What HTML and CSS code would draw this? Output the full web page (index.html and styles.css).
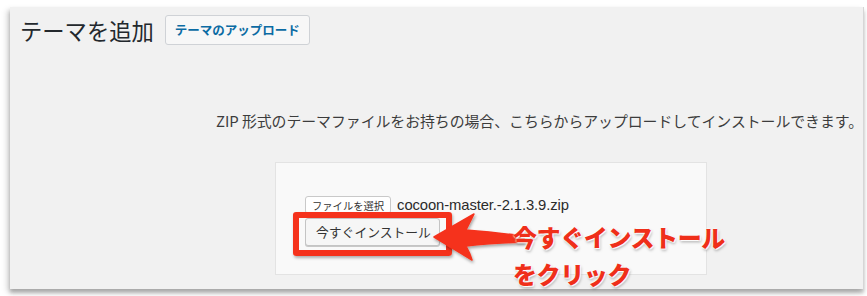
FILE: index.html
```html
<!DOCTYPE html>
<html lang="ja">
<head>
<meta charset="utf-8">
<title>テーマを追加</title>
<link rel="stylesheet" href="styles.css">
</head>
<body>
<div class="frame">
  <div class="header">
    <h1 class="title">テーマを追加</h1>
    <span class="upload-btn">テーマのアップロード</span>
  </div>
  <p class="desc">ZIP 形式のテーマファイルをお持ちの場合、こちらからアップロードしてインストールできます。</p>
  <div class="upload-box">
    <div class="file-row">
      <span class="file-btn">ファイルを選択</span>
      <span class="file-name">cocoon-master.-2.1.3.9.zip</span>
    </div>
    <span class="install-btn">今すぐインストール</span>
  </div>
  <div class="highlight"></div>
  <svg class="arrow" width="110" height="60" viewBox="0 0 110 60">
    <defs>
      <filter id="sh" x="-20%" y="-20%" width="140%" height="150%">
        <feDropShadow dx="1" dy="2" stdDeviation="1.5" flood-color="#000" flood-opacity="0.35"/>
      </filter>
    </defs>
    <path d="M3 27 L43 4 Q38 14 35 20 Q60 22 93 26 L93 32 Q60 33 35 36 Q39 43 41 50 Z" fill="#f5321c" stroke="#f5321c" stroke-width="1.5" stroke-linejoin="round" filter="url(#sh)"/>
  </svg>
  <div class="note">
    <div>今すぐインストール</div>
    <div>をクリック</div>
  </div>
</div>
</body>
</html>
```

FILE: styles.css
```css
html, body {
  margin: 0;
  padding: 0;
  background: #ffffff;
}
body {
  width: 867px;
  height: 296px;
  overflow: hidden;
  font-family: "Noto Sans CJK JP", "Noto Sans", sans-serif;
}
.frame {
  position: relative;
  margin: 7px 3px 0 10px;
  height: 282px;
  background: #f1f1f1;
  box-shadow: -3px 3px 6px rgba(0,0,0,0.15), 0 4px 4px rgba(0,0,0,0.25);
  border-right: 1px solid #d6d6d6;
}
.header {
  display: flex;
  align-items: center;
  gap: 11px;
  padding: 8px 0 0 10px;
}
.title {
  margin: 0;
  font-size: 22.3px;
  font-weight: 400;
  line-height: 30px;
  color: #23282d;
}
.upload-btn {
  display: inline-block;
  box-sizing: border-box;
  height: 30px;
  line-height: 27px;
  padding: 0 9px;
  border: 1px solid #cfd2d6;
  border-radius: 3px;
  background: #f7f7f7;
  color: #0b6ba3;
  font-size: 12.5px;
  font-weight: 700;
}
.desc {
  margin: 65px 0 0 206px;
  width: max-content;
  white-space: nowrap;
  font-size: 14.9px;
  line-height: 22px;
  letter-spacing: -0.05px;
  color: #3c3c3c;
}
.upload-box {
  box-sizing: border-box;
  width: 432px;
  height: 113px;
  margin: 30px 0 0 265px;
  padding: 33px 0 0 29px;
  background: #f9f9f9;
  border: 1px solid #e3e3e3;
}
.file-row {
  display: flex;
  align-items: center;
  gap: 6px;
  height: 18px;
}
.file-btn {
  display: inline-block;
  box-sizing: border-box;
  height: 18px;
  line-height: 17px;
  padding: 0 6px;
  border: 1px solid #c9c9c9;
  border-radius: 3px;
  background: #ffffff;
  color: #333333;
  font-size: 10.3px;
}
.file-name {
  font-family: "Liberation Sans", Arial, sans-serif;
  font-size: 14.8px;
  color: #2b2b2b;
  letter-spacing: -0.1px;
}
.install-btn {
  display: block;
  box-sizing: border-box;
  width: 135px;
  height: 28px;
  margin-top: 4px;
  line-height: 25px;
  padding-left: 10px;
  border: 1px solid #c4c4c4;
  border-radius: 3px;
  background: #f6f6f6;
  box-shadow: 0 1px 0 #c8c8c8;
  color: #333333;
  font-size: 12.8px;
}
.highlight {
  position: absolute;
  left: 283px;
  top: 205px;
  width: 159px;
  height: 44px;
  box-sizing: border-box;
  border: 6px solid #f5321c;
  border-radius: 3px;
  box-shadow: 1px 2px 3px rgba(0,0,0,0.3);
}
.arrow {
  position: absolute;
  left: 421px;
  top: 203px;
}
.note {
  position: absolute;
  left: 503px;
  top: 211px;
  color: #ef2f1a;
  font-size: 24px;
  font-weight: 900;
  line-height: 37px;
  letter-spacing: -0.4px;
  text-shadow: 0 0 2px #ffffff, 0 0 2px #ffffff, 1px 1px 1px #ffffff, 1px 2px 3px rgba(0,0,0,0.35);
}
```
